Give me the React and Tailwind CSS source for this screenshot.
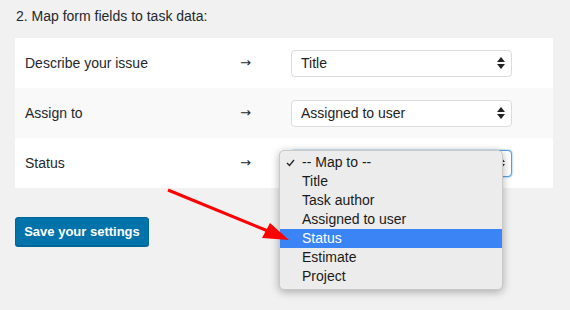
import React from "react";

const rows = [
  { label: "Describe your issue", value: "Title", bg: "bg-white" },
  { label: "Assign to", value: "Assigned to user", bg: "bg-[#f9f9f9]" },
  { label: "Status", value: "-- Map to --", bg: "bg-white", open: true },
];

const options = ["-- Map to --", "Title", "Task author", "Assigned to user", "Status", "Estimate", "Project"];

function UpDown() {
  return (
    <svg width="8" height="12" viewBox="0 0 8 12" className="shrink-0">
      <path d="M4 0 L8 5 L0 5 Z" fill="#222" />
      <path d="M4 12 L8 7 L0 7 Z" fill="#222" />
    </svg>
  );
}

function Select({ value, focused }) {
  return (
    <div
      className={
        "flex h-[27px] w-[221px] items-center justify-between rounded-[4px] border bg-white pl-[9px] pr-[6px] text-[14px] text-[#222] " +
        (focused ? "border-[#5b9dd9] shadow-[0_0_2px_rgba(30,140,190,0.8)]" : "border-[#dcdcdc]")
      }
    >
      <span>{value}</span>
      <UpDown />
    </div>
  );
}

function Dropdown() {
  return (
    <div className="absolute left-[-12px] top-0 z-10 w-[224px] rounded-[5px] border border-[#c9c9c9] bg-[#ececec] pb-[3px] pt-[2px] text-[14px] text-[#1a1a1a] shadow-[0_2px_8px_rgba(0,0,0,0.3)]">
      {options.map((o, i) => (
        <div
          key={o}
          className={"relative flex h-[19px] items-center pl-[22px] " + (o === "Status" ? "bg-[#3b84f6] text-white" : "")}
        >
          {i === 0 && (
            <svg width="9" height="8" viewBox="0 0 9 8" className="absolute left-[6px] top-[6px]">
              <path d="M1 4 L3.5 6.5 L8 1" stroke="#222" strokeWidth="1.3" fill="none" />
            </svg>
          )}
          {o}
        </div>
      ))}
    </div>
  );
}

export default function App() {
  return (
    <div
      className="relative h-[310px] w-[570px] overflow-hidden bg-[#f1f1f1] text-[#23282d]"
      style={{ fontFamily: '"Liberation Sans", Arial, sans-serif' }}
    >
      <div className="pl-[16px] pt-[7px] text-[14px] leading-[18px]">2. Map form fields to task data:</div>

      <div className="ml-[15px] mt-[13px] w-[538px]">
        {rows.map((r) => (
          <div key={r.label} className={"grid h-[50px] grid-cols-[225px_51px_1fr] items-center text-[14px] " + r.bg}>
            <div className="pl-[10px]">{r.label}</div>
            <div className="text-[13px]" style={{ fontFamily: '"DejaVu Sans", sans-serif' }}>→</div>
            <div className="relative">
              <Select value={r.value} focused={r.open} />
              {r.open && <Dropdown />}
            </div>
          </div>
        ))}
      </div>

      <button className="ml-[15px] mt-[29px] h-[29px] w-[134px] rounded-[3px] border border-[#006799] bg-[#0073aa] text-[13px] font-bold text-white shadow-[0_1px_0_#006799]">
        Save your settings
      </button>

      <svg className="pointer-events-none absolute left-0 top-0 z-20" width="570" height="310">
        <line x1="168" y1="190" x2="268" y2="231" stroke="#ff0000" strokeWidth="3" />
        <path d="M289 240 L262 238 L270 223 Z" fill="#ff0000" />
      </svg>
    </div>
  );
}
